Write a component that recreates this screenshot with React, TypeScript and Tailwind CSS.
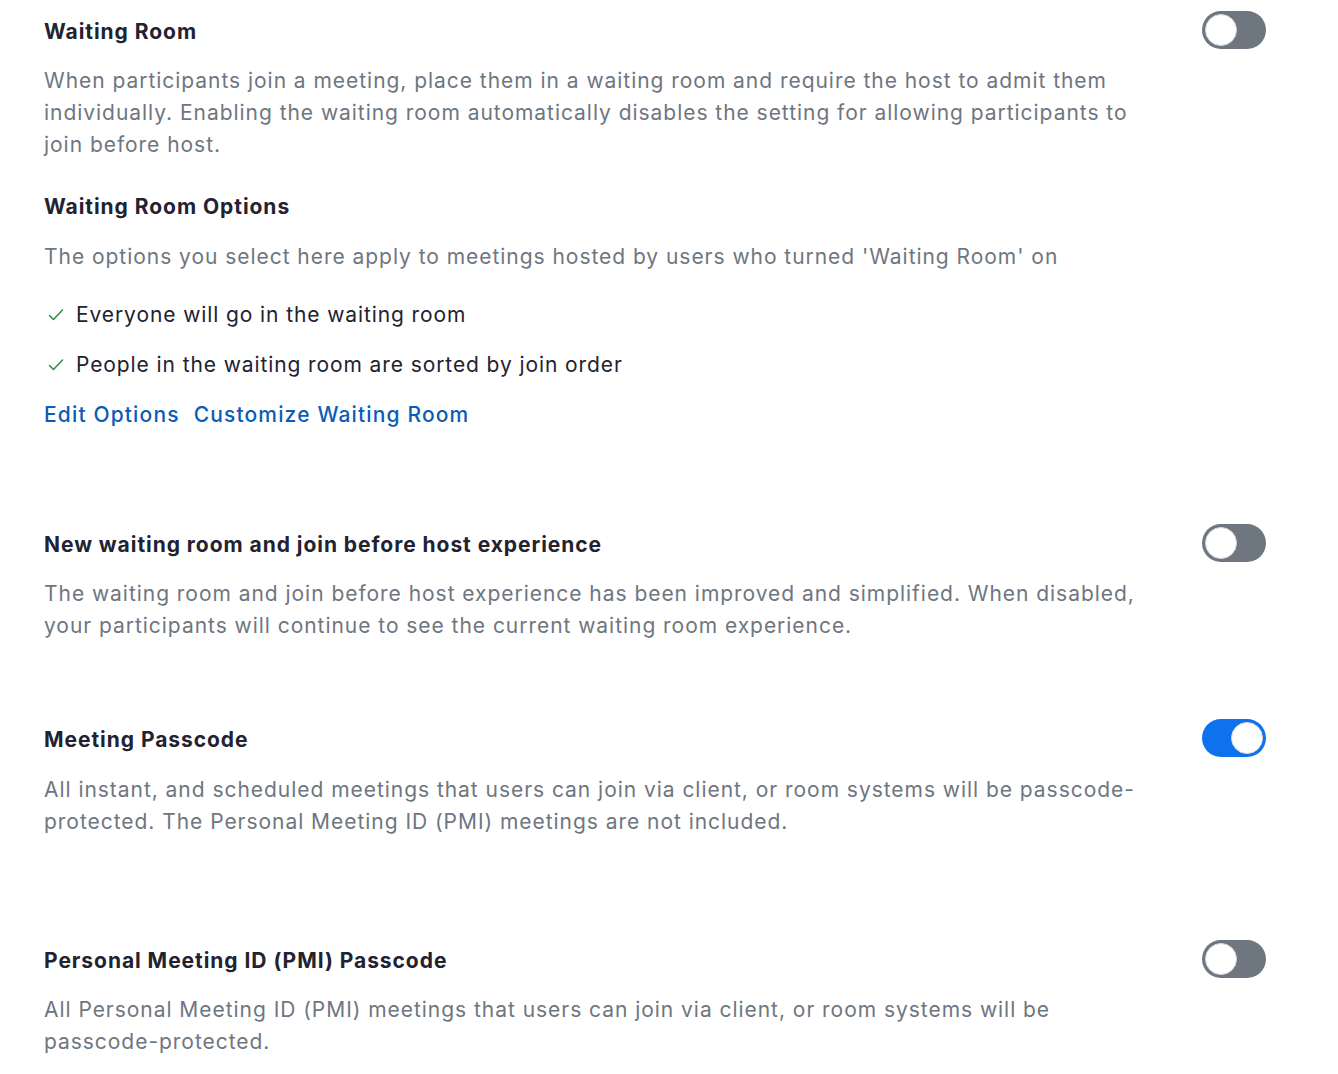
import React from "react";

const Toggle: React.FC<{ on?: boolean }> = ({ on }) => (
  <div
    className={`relative h-[38px] w-[64px] shrink-0 rounded-full ${
      on ? "bg-[#0e72ed]" : "bg-[#6e7680]"
    }`}
  >
    <div
      className={`absolute top-[3px] h-[32px] w-[32px] rounded-full border border-[#d5d7db] bg-white ${
        on ? "right-[3px]" : "left-[3px]"
      }`}
    />
  </div>
);

const Check = () => (
  <svg width="16" height="14" viewBox="0 0 16 14" fill="none" className="shrink-0">
    <path d="M1.5 7.5l4 4 9-9.5" stroke="#2e8b3e" strokeWidth="1.5" strokeLinecap="round" strokeLinejoin="round" />
  </svg>
);

const Row: React.FC<{ title: string; on?: boolean; children: React.ReactNode }> = ({
  title,
  on,
  children,
}) => (
  <div className="flex items-start">
    <div className="w-[1110px]">
      <div className="text-[21px] leading-[32px] font-bold tracking-[0.95px] text-[#222230]">{title}</div>
      {children}
    </div>
    <div className="ml-auto -mt-[5px]">
      <Toggle on={on} />
    </div>
  </div>
);

const Desc: React.FC<{ children: React.ReactNode; className?: string }> = ({ children, className }) => (
  <p className={`text-[21px] leading-[32px] tracking-[0.96px] text-[#6e7680] ${className ?? "mt-[17px]"}`}>
    {children}
  </p>
);

export default function App() {
  return (
    <div
      className="min-h-screen bg-white pl-[44px] pr-[72px] pt-[16px]"
      style={{ fontFamily: "Inter, 'Noto Sans', sans-serif" }}
    >
      <Row title="Waiting Room">
        <Desc>
          When participants join a meeting, place them in a waiting room and require the host to admit them
          individually. Enabling the waiting room automatically disables the setting for allowing participants to
          join before host.
        </Desc>
        <div className="mt-[30px] text-[21px] leading-[32px] font-bold tracking-[0.95px] text-[#222230]">
          Waiting Room Options
        </div>
        <Desc className="mt-[18px]">
          The options you select here apply to meetings hosted by users who turned 'Waiting Room' on
        </Desc>
        <div className="mt-[26px] flex flex-col gap-[18px]">
          <div className="flex items-center gap-[12px] pl-[4px] text-[21px] leading-[32px] tracking-[0.9px] text-[#222230]">
            <Check />
            Everyone will go in the waiting room
          </div>
          <div className="flex items-center gap-[12px] pl-[4px] text-[21px] leading-[32px] tracking-[0.9px] text-[#222230]">
            <Check />
            People in the waiting room are sorted by join order
          </div>
        </div>
        <div className="mt-[18px] flex gap-[14px] text-[21px] leading-[32px] font-medium tracking-[1.15px] text-[#0b5cb5]">
          <span>Edit Options</span>
          <span>Customize Waiting Room</span>
        </div>
      </Row>

      <div className="mt-[98px]">
        <Row title="New waiting room and join before host experience">
          <Desc>
            The waiting room and join before host experience has been improved and simplified. When disabled,
            your participants will continue to see the current waiting room experience.
          </Desc>
        </Row>
      </div>

      <div className="mt-[82px]">
        <Row title="Meeting Passcode" on>
          <Desc className="mt-[18px]">
            All instant, and scheduled meetings that users can join via client, or room systems will be
            passcode-protected. The Personal Meeting ID (PMI) meetings are not included.
          </Desc>
        </Row>
      </div>

      <div className="mt-[107px]">
        <Row title="Personal Meeting ID (PMI) Passcode">
          <Desc>
            All Personal Meeting ID (PMI) meetings that users can join via client, or room systems will be
            passcode-protected.
          </Desc>
        </Row>
      </div>
    </div>
  );
}
